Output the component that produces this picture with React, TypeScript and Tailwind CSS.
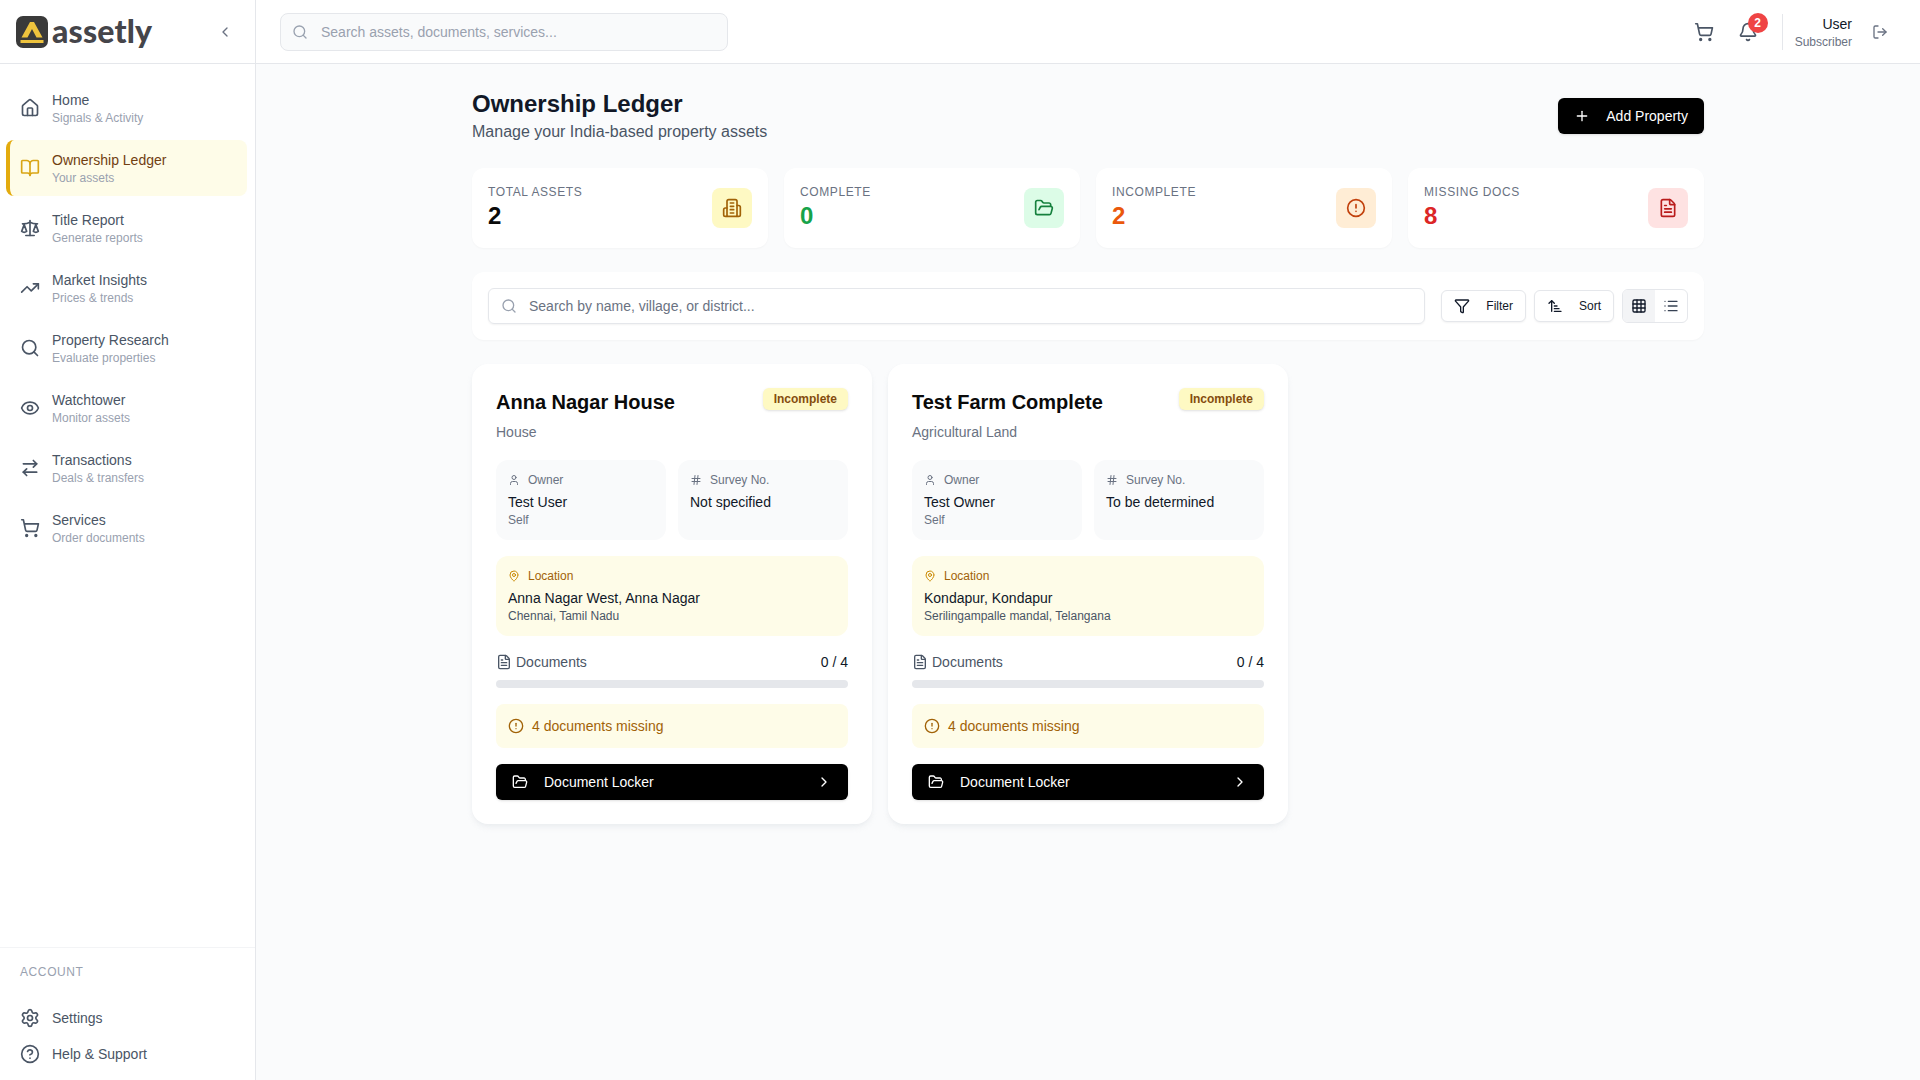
import React from "react";
import {
  House, BookOpen, Scale, TrendingUp, Search, Eye, ArrowRightLeft, ShoppingCart, Settings, CircleHelp,
  ChevronLeft, ChevronRight, Bell, LogOut, Plus, FolderOpen, CircleAlert, FileText, Filter,
  ArrowUpNarrowWide, Grid3x3, List, User, Hash, MapPin,
} from "lucide-react";

const navItems = [
  { icon: House, title: "Home", sub: "Signals & Activity" },
  { icon: BookOpen, title: "Ownership Ledger", sub: "Your assets", active: true },
  { icon: Scale, title: "Title Report", sub: "Generate reports" },
  { icon: TrendingUp, title: "Market Insights", sub: "Prices & trends" },
  { icon: Search, title: "Property Research", sub: "Evaluate properties" },
  { icon: Eye, title: "Watchtower", sub: "Monitor assets" },
  { icon: ArrowRightLeft, title: "Transactions", sub: "Deals & transfers" },
  { icon: ShoppingCart, title: "Services", sub: "Order documents" },
];

function Logo() {
  return (
    <svg width="32" height="32" viewBox="0 0 32 32" className="shrink-0">
      <rect x="0" y="0" width="32" height="32" rx="7" fill="#3a3a3a" />
      <path d="M14 6 H18 L26.5 21.5 H20.5 L16 13 L11.5 21.5 H5.5 Z" fill="#eec33d" />
      <rect x="4.5" y="24" width="23" height="3" fill="#eec33d" />
    </svg>
  );
}

function BuildingIcon({ className }: { className?: string }) {
  return (
    <svg viewBox="0 0 24 24" fill="none" stroke="currentColor" strokeWidth="2" strokeLinecap="round" strokeLinejoin="round" className={className}>
      <path d="M6 22V4a2 2 0 0 1 2-2h8a2 2 0 0 1 2 2v18Z" />
      <path d="M6 12H4a2 2 0 0 0-2 2v6a2 2 0 0 0 2 2h2" />
      <path d="M18 9h2a2 2 0 0 1 2 2v9a2 2 0 0 1-2 2h-2" />
      <path d="M10 6h4" />
      <path d="M10 10h4" />
      <path d="M10 14h4" />
      <path d="M10 18h4" />
    </svg>
  );
}

function Sidebar() {
  return (
    <aside className="w-[256px] shrink-0 h-full flex flex-col bg-white border-r border-gray-200">
      <div className="h-[64px] shrink-0 border-b border-gray-200 flex items-center pl-4 pr-[22px]">
        <Logo />
        <span className="ml-[4px] text-[32px] leading-none font-black text-[#45454a] font-['Lato',sans-serif] tracking-[0.2px] pb-[2px]">assetly</span>
        <ChevronLeft className="ml-auto w-4 h-4 text-gray-500" />
      </div>
      <nav className="flex-1 pt-4 pl-[6px] pr-2 flex flex-col gap-1">
        {navItems.map((n) => {
          const Icon = n.icon;
          return (
            <div
              key={n.title}
              className={
                n.active
                  ? "h-14 flex items-center gap-3 pl-[10px] border-l-4 border-[#e3ab0e] rounded-lg bg-[#fefce8]"
                  : "h-14 flex items-center gap-3 pl-[14px] rounded-lg"
              }
            >
              <Icon className={n.active ? "w-5 h-5 text-[#d9a514]" : "w-5 h-5 text-gray-600"} />
              <div className="flex flex-col">
                <span className={n.active ? "text-sm leading-5 text-[#713f12]" : "text-sm leading-5 text-gray-600"}>{n.title}</span>
                <span className="text-xs leading-4 text-gray-400">{n.sub}</span>
              </div>
            </div>
          );
        })}
      </nav>
      <div className="border-t border-gray-100 pt-4 pb-2 px-5">
        <div className="text-xs leading-4 uppercase tracking-wider text-gray-400 mb-5">Account</div>
        <div className="h-9 flex items-center gap-3 text-sm text-gray-600">
          <Settings className="w-5 h-5" />
          Settings
        </div>
        <div className="h-9 flex items-center gap-3 text-sm text-gray-600">
          <CircleHelp className="w-5 h-5" />
          Help &amp; Support
        </div>
      </div>
    </aside>
  );
}

function TopBar() {
  return (
    <header className="h-[64px] shrink-0 bg-white border-b border-gray-200 flex items-center pl-6 pr-8">
      <div className="relative w-[448px] h-[38px] flex items-center bg-gray-50 border border-gray-200 rounded-lg pl-[11px] gap-[13px]">
        <Search className="w-4 h-4 text-gray-400 shrink-0" />
        <span className="text-sm text-gray-400">Search assets, documents, services...</span>
      </div>
      <div className="ml-auto flex items-center">
        <ShoppingCart className="w-5 h-5 text-gray-600" />
        <div className="relative ml-6">
          <Bell className="w-5 h-5 text-gray-600" />
          <span className="absolute -top-[9px] -right-[10px] w-5 h-5 rounded-full bg-[#ef4444] text-white text-xs font-bold flex items-center justify-center">2</span>
        </div>
        <div className="w-px h-9 bg-gray-200 ml-6" />
        <div className="ml-3 flex flex-col items-end">
          <span className="text-sm leading-5 text-gray-900">User</span>
          <span className="text-xs leading-4 text-gray-500">Subscriber</span>
        </div>
        <LogOut className="w-4 h-4 text-gray-500 ml-5" />
      </div>
    </header>
  );
}

function Stat({ label, value, valueClass, boxClass, icon: Icon, iconClass }: any) {
  return (
    <div className="bg-white rounded-xl shadow-[0_1px_2px_rgba(0,0,0,0.03)] p-4 flex items-center justify-between">
      <div>
        <div className="text-xs leading-4 uppercase tracking-wider text-gray-500">{label}</div>
        <div className={"text-2xl leading-8 font-bold " + valueClass}>{value}</div>
      </div>
      <div className={"w-10 h-10 rounded-lg flex items-center justify-center " + boxClass}>
        <Icon className={"w-5 h-5 " + iconClass} />
      </div>
    </div>
  );
}

function Card({ title, type, owner, survey, loc, sub }: { title: string; type: string; owner: string; survey: string; loc: string; sub: string }) {
  return (
    <div className="bg-white rounded-2xl shadow-md shadow-gray-200/60 p-6 flex flex-col gap-4">
      <div className="mb-[2px]">
        <div className="flex items-start justify-between">
          <h3 className="text-xl leading-7 font-semibold text-[#0a0a0a]">{title}</h3>
          <span className="h-[22px] px-[11px] flex items-center rounded-md bg-[#fef9c3] text-xs font-semibold text-[#854d0e] shadow-sm">Incomplete</span>
        </div>
        <p className="text-sm leading-5 text-gray-500 mt-[6px]">{type}</p>
      </div>
      <div className="grid grid-cols-2 gap-3">
        <div className="bg-gray-50 rounded-xl p-3 h-20">
          <div className="flex items-center gap-2 text-xs leading-4 text-gray-500"><User className="w-3 h-3" />Owner</div>
          <div className="text-sm leading-5 text-gray-900 mt-1">{owner}</div>
          <div className="text-xs leading-4 text-gray-500">Self</div>
        </div>
        <div className="bg-gray-50 rounded-xl p-3 h-20">
          <div className="flex items-center gap-2 text-xs leading-4 text-gray-500"><Hash className="w-3 h-3" />Survey No.</div>
          <div className="text-sm leading-5 text-gray-900 mt-1">{survey}</div>
        </div>
      </div>
      <div className="bg-[#fefce8] rounded-xl p-3 h-20">
        <div className="flex items-center gap-2 text-xs leading-4 text-[#a16207]"><MapPin className="w-3 h-3 text-[#ca8a04]" />Location</div>
        <div className="text-sm leading-5 text-gray-900 mt-1">{loc}</div>
        <div className="text-xs leading-4 text-gray-600">{sub}</div>
      </div>
      <div>
        <div className="flex items-center justify-between mb-2 text-sm leading-5">
          <span className="flex items-center gap-1 text-gray-600"><FileText className="w-4 h-4" />Documents</span>
          <span className="text-gray-900">0 / 4</span>
        </div>
        <div className="h-2 rounded-full bg-gray-200" />
      </div>
      <div className="bg-[#fefce8] rounded-lg p-3 flex items-center gap-2 text-sm leading-5 text-[#a16207]">
        <CircleAlert className="w-4 h-4" />
        4 documents missing
      </div>
      <div className="h-9 rounded-md bg-black text-white px-4 flex items-center gap-4 text-sm shadow-sm">
        <FolderOpen className="w-4 h-4" />
        Document Locker
        <ChevronRight className="w-4 h-4 ml-auto" />
      </div>
    </div>
  );
}

export default function App() {
  return (
    <div className="h-screen w-full flex overflow-hidden bg-[#fafbfc] font-['Liberation_Sans',Arial,sans-serif]">
      <Sidebar />
      <div className="flex-1 min-w-0 flex flex-col">
        <TopBar />
        <main className="flex-1 overflow-hidden">
          <div className="max-w-[1280px] mx-auto px-6 py-6">
            <div className="flex items-center justify-between mb-6">
              <div>
                <h1 className="text-2xl leading-8 font-semibold text-[#111827]">Ownership Ledger</h1>
                <p className="text-base leading-6 text-gray-600">Manage your India-based property assets</p>
              </div>
              <button className="h-9 px-4 rounded-md bg-black text-white text-sm flex items-center gap-4 shadow-sm">
                <Plus className="w-4 h-4" />
                Add Property
              </button>
            </div>
            <div className="grid grid-cols-4 gap-4 mb-6">
              <Stat label="Total Assets" value="2" valueClass="text-[#0a0a0a]" boxClass="bg-[#fef9c3]" icon={BuildingIcon} iconClass="text-[#a16207]" />
              <Stat label="Complete" value="0" valueClass="text-[#16a34a]" boxClass="bg-[#dcfce7]" icon={FolderOpen} iconClass="text-[#15803d]" />
              <Stat label="Incomplete" value="2" valueClass="text-[#ea580c]" boxClass="bg-[#ffedd5]" icon={CircleAlert} iconClass="text-[#c2410c]" />
              <Stat label="Missing Docs" value="8" valueClass="text-[#dc2626]" boxClass="bg-[#fee2e2]" icon={FileText} iconClass="text-[#b91c1c]" />
            </div>
            <div className="bg-white rounded-xl shadow-[0_1px_2px_rgba(0,0,0,0.03)] p-4 flex items-center gap-4 mb-6">
              <div className="flex-1 h-9 flex items-center gap-3 pl-3 border border-gray-200 rounded-md shadow-xs">
                <Search className="w-4 h-4 text-gray-400 shrink-0" />
                <span className="text-sm text-gray-500">Search by name, village, or district...</span>
              </div>
              <div className="flex items-center gap-2">
                <div className="h-8 px-3 flex items-center gap-4 border border-gray-200 rounded-md bg-white shadow-xs text-xs text-gray-900">
                  <Filter className="w-4 h-4" />Filter
                </div>
                <div className="h-8 px-3 flex items-center gap-4 border border-gray-200 rounded-md bg-white shadow-xs text-xs text-gray-900">
                  <ArrowUpNarrowWide className="w-4 h-4" />Sort
                </div>
                <div className="flex border border-gray-200 rounded-md overflow-hidden">
                  <div className="w-8 h-8 bg-gray-100 flex items-center justify-center"><Grid3x3 className="w-4 h-4 text-gray-900" /></div>
                  <div className="w-8 h-8 flex items-center justify-center"><List className="w-4 h-4 text-gray-700" /></div>
                </div>
              </div>
            </div>
            <div className="grid grid-cols-3 gap-4">
              <Card title="Anna Nagar House" type="House" owner="Test User" survey="Not specified" loc="Anna Nagar West, Anna Nagar" sub="Chennai, Tamil Nadu" />
              <Card title="Test Farm Complete" type="Agricultural Land" owner="Test Owner" survey="To be determined" loc="Kondapur, Kondapur" sub="Serilingampalle mandal, Telangana" />
            </div>
          </div>
        </main>
      </div>
    </div>
  );
}
